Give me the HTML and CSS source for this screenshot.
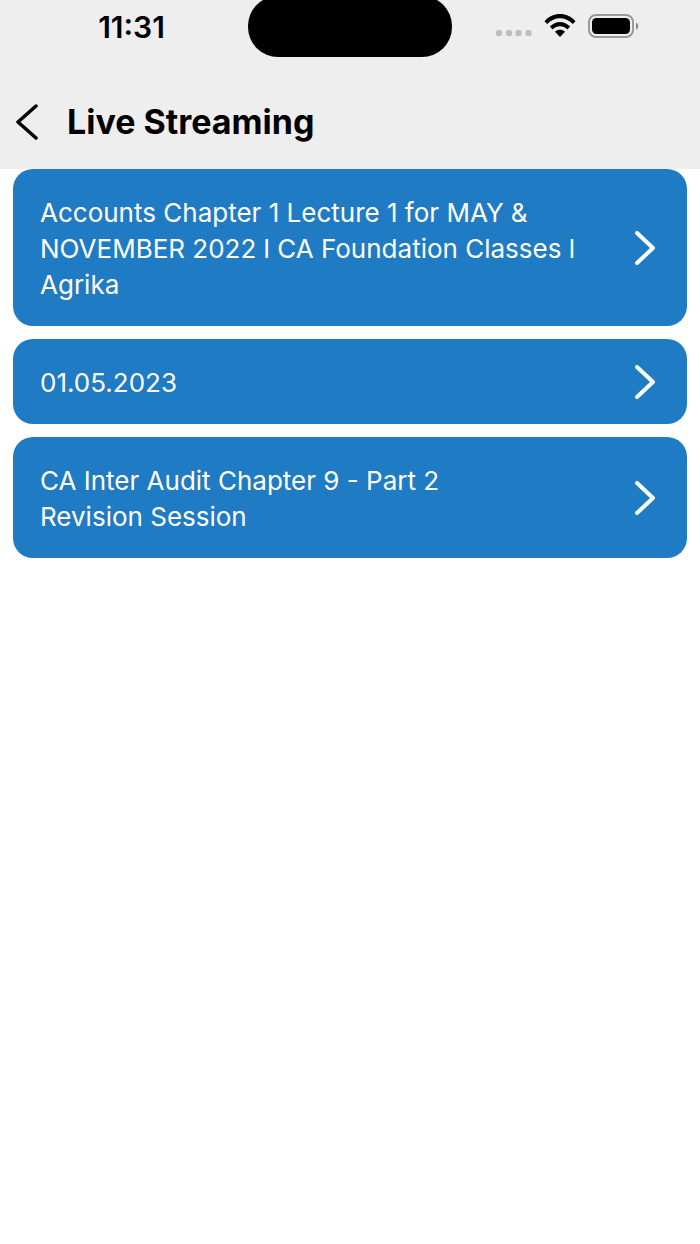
FILE: index.html
```html
<!DOCTYPE html>
<html lang="en">
<head>
<meta charset="utf-8">
<meta name="viewport" content="width=device-width, initial-scale=1">
<title>Live Streaming</title>
<link rel="stylesheet" href="styles.css">
</head>
<body>
<header class="header">
  <div class="status">
    <time class="clock">11:31</time>
    <div class="island"></div>
    <div class="indicators">
      <svg class="signal" width="36" height="8" viewBox="0 0 36 8" aria-hidden="true"><g fill="#bdbdbd"><rect x="0" y="1" width="6" height="6" rx="2"/><rect x="10" y="1" width="6" height="6" rx="2"/><rect x="19.500" y="1" width="6" height="6" rx="2"/><rect x="29.500" y="1" width="6" height="6" rx="2"/></g></svg>
      <svg width="32" height="24" viewBox="0 0 32 24" aria-hidden="true"><path d="M.5 7.200C9-2.300 23-2.300 31.500 7.200L28.800 10C21.500 2.400 10.500 2.400 3.200 10zM5.800 12.600C11.500 6.300 20.500 6.300 26.200 12.600L23.300 15.500C19 11.200 13 11.200 8.700 15.500zM11 17.800C13.800 15.200 18.200 15.200 21 17.800L16 23z"/></svg>
      <svg width="52" height="24" viewBox="0 0 52 24" aria-hidden="true"><rect x="1" y="1" width="44" height="22" rx="7" fill="none" stroke="#999" stroke-width="2"/><rect x="4" y="4" width="38" height="16" rx="4.500"/><path d="M48 8.500c3 1.500 3 6 0 7z" fill="#888"/></svg>
    </div>
  </div>
  <div class="titlebar">
    <button class="back" type="button" aria-label="Back"><svg width="22" height="36" viewBox="0 0 22 36" aria-hidden="true"><path d="M20 2L2 18l18 16" fill="none" stroke="#000" stroke-width="3.500" stroke-linecap="round" stroke-linejoin="round"/></svg></button>
    <h1 class="title">Live Streaming</h1>
  </div>
</header>
<main class="list">
  <a class="card" href="#accounts"><span class="label">Accounts Chapter 1 Lecture 1 for MAY &amp; NOVEMBER 2022 l CA Foundation Classes l Agrika</span><svg class="chevron" width="20" height="34" viewBox="0 0 20 34" aria-hidden="true"><path d="M2 2l16 15L2 32"/></svg></a>
  <a class="card" href="#may"><span class="label">01.05.2023</span><svg class="chevron" width="20" height="34" viewBox="0 0 20 34" aria-hidden="true"><path d="M2 2l16 15L2 32"/></svg></a>
  <a class="card" href="#audit"><span class="label">CA Inter Audit Chapter 9 - Part 2<br>Revision Session</span><svg class="chevron" width="20" height="34" viewBox="0 0 20 34" aria-hidden="true"><path d="M2 2l16 15L2 32"/></svg></a>
</main>
</body>
</html>
```
FILE: styles.css
```css
* { box-sizing: border-box; }
body { margin: 0; background: #fff; font-family: Inter, "Liberation Sans", sans-serif; color: #000; }
.header { background: #eee; overflow: hidden; }
.status { display: grid; grid-template-columns: 1fr 204px 1fr; height: 75px; align-items: start; }
.clock { font-size: 30px; line-height: 32px; font-weight: 600; padding-top: 11px; text-align: center; padding-left: 15px; }
.island { height: 61px; margin-top: -4px; background: #000; border-radius: 30px; }
.indicators { display: flex; gap: 12px; padding: 14px 0 0 44px; }
.signal { margin-top: 15px; }
.titlebar { display: flex; align-items: center; gap: 29px; height: 94px; padding-left: 16px; }
.back { display: flex; padding: 0; border: 0; background: none; }
.title { margin: 0; font-size: 34px; line-height: 44px; font-weight: 700; }
.list { display: flex; flex-direction: column; gap: 13px; padding: 0 13px; }
.card { display: flex; align-items: center; justify-content: space-between; gap: 32px; padding: 23px 32px 23px 27px; border-radius: 20px; background: #1f7bc4; color: #fff; text-decoration: none; }
.label { padding-top: 3px; font-size: 26px; line-height: 36px; }
.chevron { flex: none; fill: none; stroke: #fff; stroke-width: 4; stroke-linecap: round; stroke-linejoin: round; }
```
